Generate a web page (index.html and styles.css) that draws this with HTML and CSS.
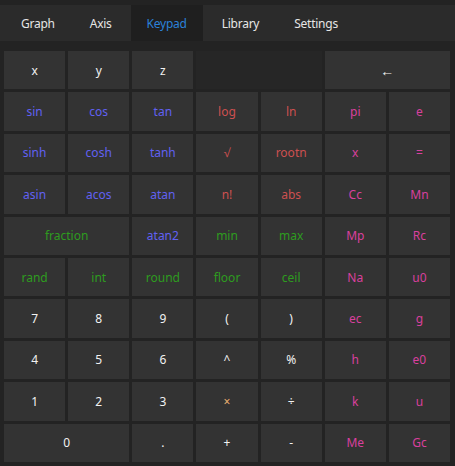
FILE: index.html
```html
<!DOCTYPE html>
<html>
<head>
<meta charset="utf-8">
<link rel="stylesheet" href="styles.css">
</head>
<body>
<nav class="tabs">
  <div class="tab">Graph</div>
  <div class="tab">Axis</div>
  <div class="tab active">Keypad</div>
  <div class="tab">Library</div>
  <div class="tab">Settings</div>
</nav>
<main class="pad">
  <button class="key w">x</button>
  <button class="key w">y</button>
  <button class="key w">z</button>
  <div class="blank span2"></div>
  <button class="key w span2 back">←</button>

  <button class="key b">sin</button>
  <button class="key b">cos</button>
  <button class="key b">tan</button>
  <button class="key r">log</button>
  <button class="key r">ln</button>
  <button class="key m">pi</button>
  <button class="key m">e</button>

  <button class="key b">sinh</button>
  <button class="key b">cosh</button>
  <button class="key b">tanh</button>
  <button class="key r">√</button>
  <button class="key r">rootn</button>
  <button class="key m">x</button>
  <button class="key m">=</button>

  <button class="key b">asin</button>
  <button class="key b">acos</button>
  <button class="key b">atan</button>
  <button class="key r">n!</button>
  <button class="key r">abs</button>
  <button class="key m">Cc</button>
  <button class="key m">Mn</button>

  <button class="key g span2">fraction</button>
  <button class="key b">atan2</button>
  <button class="key g">min</button>
  <button class="key g">max</button>
  <button class="key m">Mp</button>
  <button class="key m">Rc</button>

  <button class="key g">rand</button>
  <button class="key g">int</button>
  <button class="key g">round</button>
  <button class="key g">floor</button>
  <button class="key g">ceil</button>
  <button class="key m">Na</button>
  <button class="key m">u0</button>

  <button class="key w">7</button>
  <button class="key w">8</button>
  <button class="key w">9</button>
  <button class="key w">(</button>
  <button class="key w">)</button>
  <button class="key m">ec</button>
  <button class="key m">g</button>

  <button class="key w">4</button>
  <button class="key w">5</button>
  <button class="key w">6</button>
  <button class="key w">^</button>
  <button class="key w">%</button>
  <button class="key m">h</button>
  <button class="key m">e0</button>

  <button class="key w">1</button>
  <button class="key w">2</button>
  <button class="key w">3</button>
  <button class="key o">×</button>
  <button class="key w">÷</button>
  <button class="key m">k</button>
  <button class="key m">u</button>

  <button class="key w span2">0</button>
  <button class="key w">.</button>
  <button class="key w">+</button>
  <button class="key w">-</button>
  <button class="key m">Me</button>
  <button class="key m">Gc</button>
</main>
</body>
</html>
```

FILE: styles.css
```css
html, body {
  margin: 0;
  padding: 0;
  width: 455px;
  height: 466px;
  background: #232323;
  font-family: "Noto Sans", "Open Sans", sans-serif;
  overflow: hidden;
}

.tabs {
  margin-top: 5px;
  height: 36px;
  background: #2b2b2b;
  display: flex;
  gap: 3px;
  padding-left: 5px;
}

.tab {
  display: flex;
  align-items: center;
  padding: 0 16px;
  color: #e6e6e6;
  font-size: 12px;
  letter-spacing: -0.25px;
}

.tab.active {
  background: #1f1f1f;
  color: #2b82d9;
}

.pad {
  box-sizing: border-box;
  height: 425px;
  padding: 10px 5px 4px 4px;
  display: grid;
  grid-template-columns: repeat(7, 1fr);
  grid-template-rows: repeat(10, 1fr);
  gap: 3px;
}

.key {
  border: none;
  margin: 0;
  padding: 0;
  background: #333333;
  font-family: inherit;
  font-size: 12px;
  display: flex;
  align-items: center;
  justify-content: center;
}

.back {
  font-size: 14px;
}

.span2 {
  grid-column: span 2;
}

.blank {
  background: #262626;
}

.w { color: #f2f2f2; }
.b { color: #6161f2; }
.r { color: #cd5050; }
.m { color: #d9409e; }
.g { color: #2e9c1f; }
.o { color: #e8b070; }
```
